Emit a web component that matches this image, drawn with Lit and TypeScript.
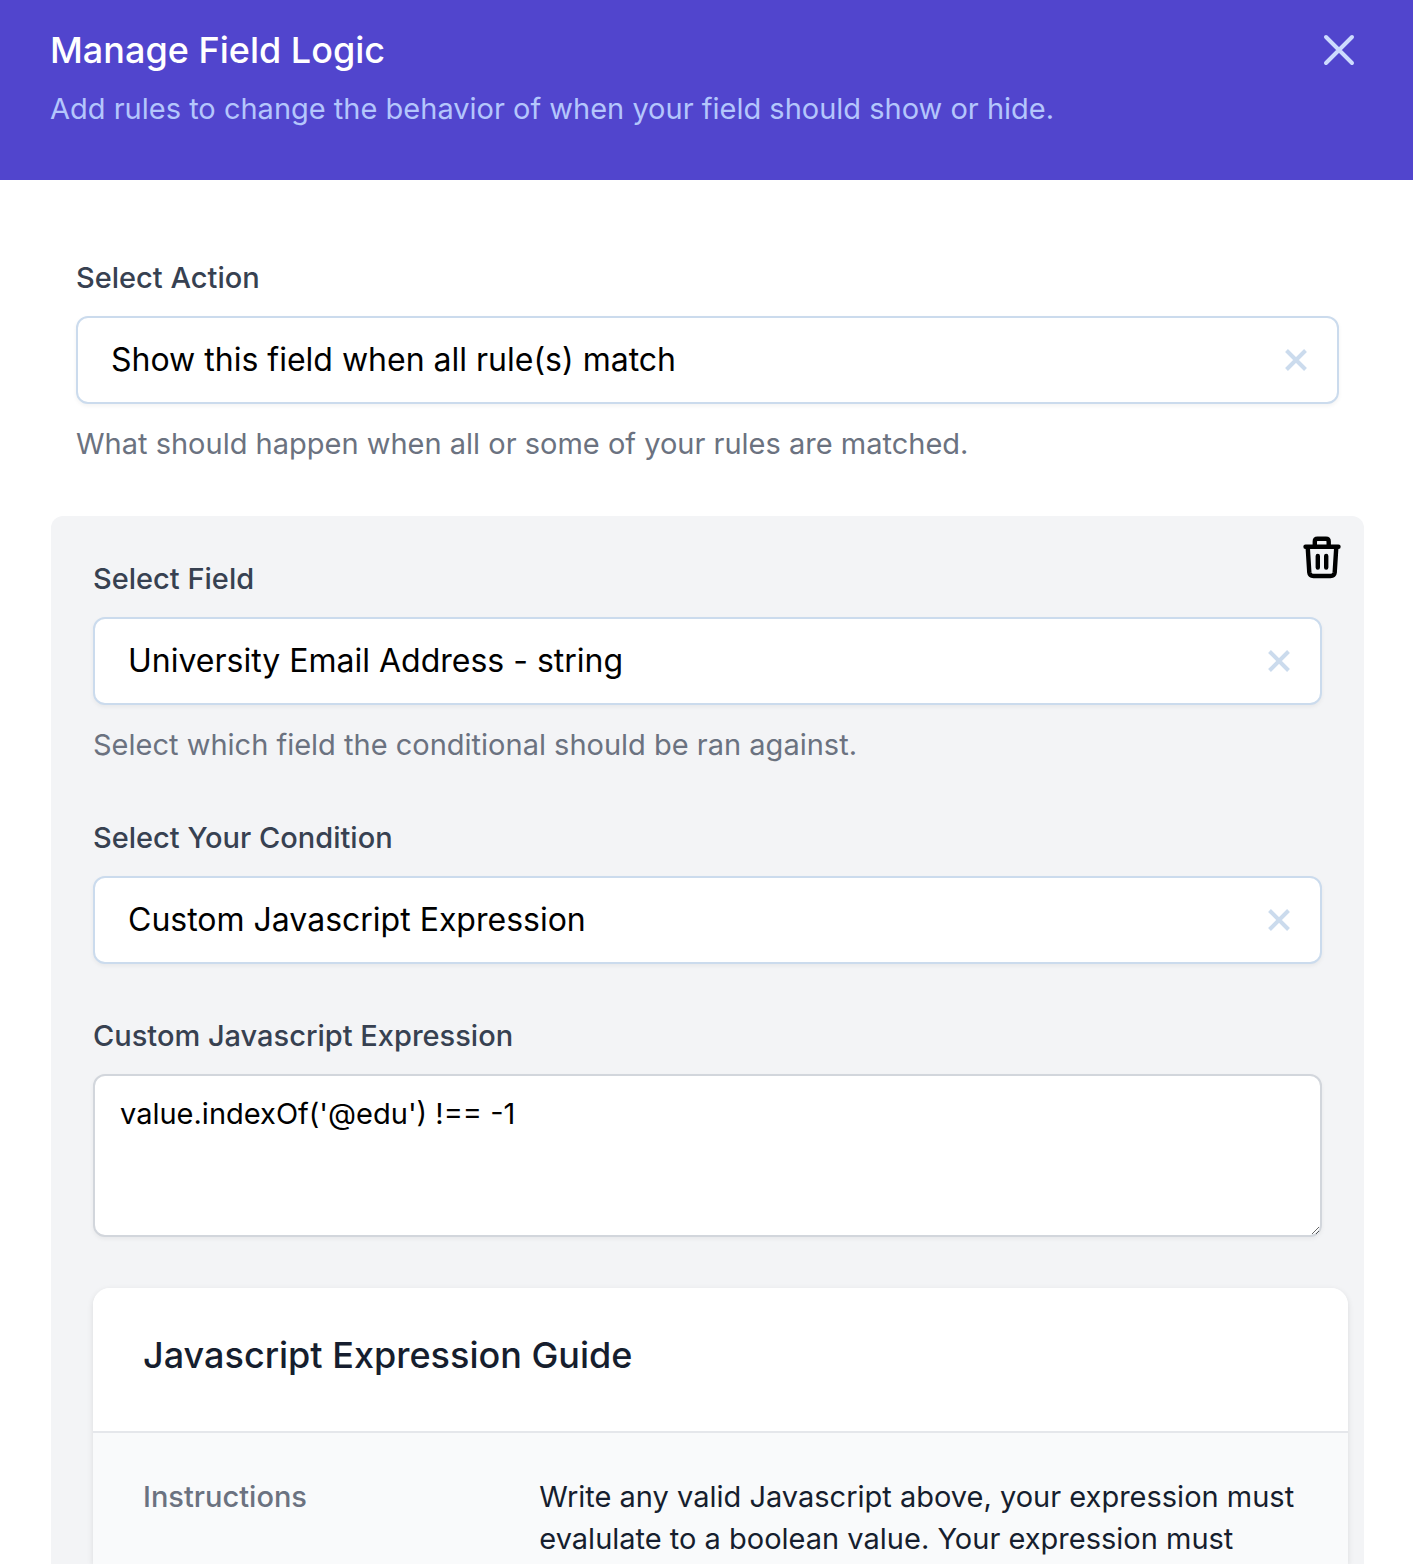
import { LitElement, html, css, svg } from "lit";
import { customElement, property, state } from "lit/decorators.js";

const crossIcon = svg`<path d="M2.500 2.500 21.500 21.500M21.500 2.500 2.500 21.500" />`;

@customElement("clearable-select")
class ClearableSelect extends LitElement {
  @property() label = "";
  @property() value = "";
  @property() hint = "";

  static styles = css`
    :host {
      display: block;
    }
    .label {
      display: block;
      margin-bottom: 17px;
      font-weight: 500;
      color: #374151;
    }
    .box {
      display: flex;
      align-items: center;
      box-sizing: border-box;
      height: 88px;
      padding: 0 29px 0 33px;
      border: 2px solid #cbdbed;
      border-radius: 12px;
      background: #fff;
      box-shadow: 0 2px 4px rgba(0, 0, 0, 0.05);
    }
    .select {
      flex: 1;
      min-width: 0;
      height: 100%;
      padding: 0;
      border: 0;
      outline: 0;
      appearance: none;
      background: none;
      font: inherit;
      font-size: 32px;
      color: #000;
    }
    .clear {
      display: flex;
      padding: 0;
      border: 0;
      background: none;
      cursor: pointer;
    }
    .icon {
      width: 24px;
      height: 24px;
      fill: none;
      stroke: #cbdbed;
      stroke-width: 4;
    }
    .hint {
      margin: 19px 0 0;
      color: #6b7280;
    }
  `;

  private clear() {
    this.value = "";
  }

  render() {
    return html`
      <label class="label" for="control">${this.label}</label>
      <div class="box">
        <select class="select" id="control">
          <option>${this.value}</option>
        </select>
        <button class="clear" type="button" aria-label="Clear" @click=${this.clear}>
          <svg class="icon" viewBox="0 0 24 24" aria-hidden="true">${crossIcon}</svg>
        </button>
      </div>
      ${this.hint ? html`<p class="hint">${this.hint}</p>` : null}
    `;
  }
}

@customElement("app-root")
class AppRoot extends LitElement {
  @state() private expression = "value.indexOf('@edu') !== -1";

  static styles = css`
    :host {
      display: flex;
      flex-direction: column;
      min-height: 100vh;
      background: #fff;
      font-family: Inter, "Liberation Sans", sans-serif;
      font-size: 29px;
      line-height: 42px;
    }
    .header {
      display: flex;
      justify-content: space-between;
      align-items: flex-start;
      padding: 25px 58px 50px 50px;
      background: #5145cd;
    }
    .title {
      margin: 0 0 13px;
      font-size: 36px;
      line-height: 50px;
      font-weight: 500;
      color: #fff;
    }
    .subtitle {
      margin: 0;
      color: #b4c6fc;
    }
    .icon-button {
      display: flex;
      padding: 0;
      border: 0;
      background: none;
      cursor: pointer;
    }
    .close {
      padding-top: 9px;
    }
    .close-icon {
      width: 32px;
      height: 32px;
      fill: none;
      stroke: #cddbfe;
      stroke-width: 4;
      stroke-linecap: round;
    }
    .main {
      display: flex;
      flex-direction: column;
      flex: 1;
      gap: 51px;
      padding: 77px 49px 0 51px;
    }
    .action {
      margin: 0 25px;
    }
    .rule {
      position: relative;
      display: flex;
      flex-direction: column;
      flex: 1;
      gap: 51px;
      padding: 42px 42px 0;
      border-radius: 12px 12px 0 0;
      background: #f3f4f6;
    }
    .remove {
      position: absolute;
      top: 20px;
      right: 22px;
    }
    .trash-icon {
      width: 40px;
      height: 44px;
      fill: none;
      stroke: #000;
      stroke-width: 4.4;
      stroke-linecap: round;
      stroke-linejoin: round;
    }
    .label {
      display: block;
      margin-bottom: 17px;
      font-weight: 500;
      color: #374151;
    }
    .code {
      display: block;
      box-sizing: border-box;
      width: 100%;
      height: 163px;
      padding: 17px 25px;
      border: 2px solid #d2d6dc;
      border-radius: 12px;
      outline: 0;
      background: #fff;
      box-shadow: 0 2px 4px rgba(0, 0, 0, 0.05);
      font: inherit;
      color: #000;
      resize: both;
    }
    .guide {
      flex: 1;
      margin-right: -26px;
      border-radius: 17px 17px 0 0;
      background: #f9fafb;
      box-shadow: 0 2px 6px rgba(0, 0, 0, 0.1);
      overflow: hidden;
    }
    .guide-title {
      margin: 0;
      padding: 42px 50px 51px;
      border-bottom: 2px solid #e5e7eb;
      background: #fff;
      font-size: 36px;
      line-height: 50px;
      font-weight: 500;
      color: #161e2e;
    }
    .guide-list {
      display: grid;
      grid-template-columns: repeat(3, 1fr);
      gap: 34px;
      margin: 0;
      padding: 43px 50px 0;
    }
    .term {
      font-weight: 500;
      color: #6b7280;
    }
    .detail {
      grid-column: span 2;
      margin: 0;
      color: #161e2e;
    }
  `;

  private onInput(e: Event) {
    this.expression = (e.target as HTMLTextAreaElement).value;
  }

  render() {
    return html`
      <header class="header">
        <div>
          <h1 class="title">Manage Field Logic</h1>
          <p class="subtitle">Add rules to change the behavior of when your field should show or hide.</p>
        </div>
        <button class="icon-button close" type="button" aria-label="Close">
          <svg class="close-icon" viewBox="0 0 32 32" aria-hidden="true">
            <path d="M3 3 29 29M29 3 3 29" />
          </svg>
        </button>
      </header>
      <main class="main">
        <clearable-select
          class="action"
          label="Select Action"
          value="Show this field when all rule(s) match"
          hint="What should happen when all or some of your rules are matched."
        ></clearable-select>
        <section class="rule">
          <button class="icon-button remove" type="button" aria-label="Remove rule">
            <svg class="trash-icon" viewBox="0 0 40 44" aria-hidden="true">
              <path d="M3.500 10.800H36.500M5.700 11 7.300 36.500Q7.700 40 11.500 40H28.500Q32.300 40 32.700 36.500L34.300 11M12.800 10V5.500Q12.800 2.800 15.500 2.800H24Q26.700 2.800 26.700 5.500V10M15.800 20V31.500M24.200 20V31.500" />
            </svg>
          </button>
          <clearable-select
            label="Select Field"
            value="University Email Address - string"
            hint="Select which field the conditional should be ran against."
          ></clearable-select>
          <clearable-select
            label="Select Your Condition"
            value="Custom Javascript Expression"
          ></clearable-select>
          <div>
            <label class="label" for="expression">Custom Javascript Expression</label>
            <textarea
              class="code"
              id="expression"
              spellcheck="false"
              .value=${this.expression}
              @input=${this.onInput}
            ></textarea>
          </div>
          <article class="guide">
            <h2 class="guide-title">Javascript Expression Guide</h2>
            <dl class="guide-list">
              <dt class="term">Instructions</dt>
              <dd class="detail">
                Write any valid Javascript above, your expression must evalulate to a boolean value. Your expression must
              </dd>
            </dl>
          </article>
        </section>
      </main>
    `;
  }
}
